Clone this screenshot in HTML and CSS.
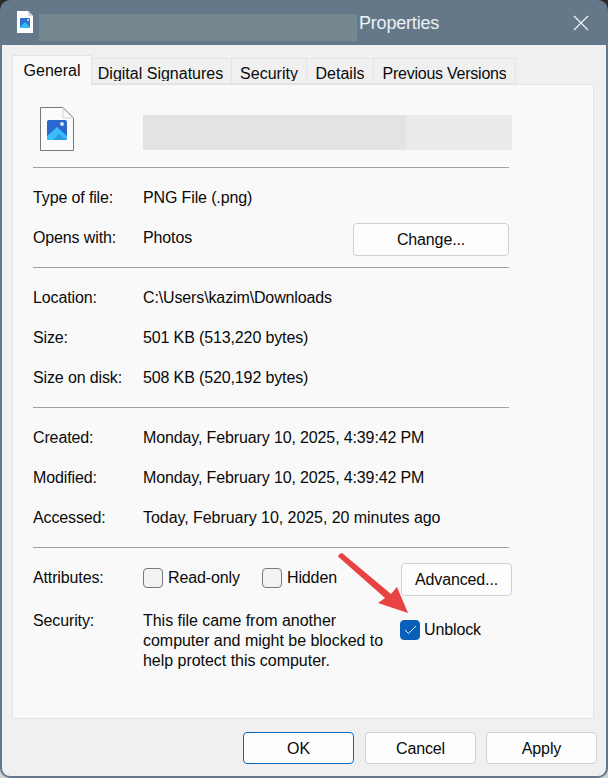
FILE: index.html
```html
<!DOCTYPE html>
<html lang="en">
<head>
<meta charset="utf-8">
<title>Properties</title>
<link rel="stylesheet" href="styles.css">
</head>
<body>
<div class="window">
  <header class="titlebar">
    <svg class="title-icon" width="16" height="22" viewBox="0 0 16 22">
      <path d="M0 0H11L16 5V22H0Z" fill="#fff"/>
      <path d="M11 0L16 5H11Z" fill="#d8d8d8"/>
      <rect x="3" y="7" width="10" height="10" rx="1" fill="#2f6fd0"/>
      <path d="M3 16L8 11L13 16V17H3Z" fill="#35b9f5"/>
      <circle cx="11" cy="9" r="1" fill="#dfe8f5"/>
    </svg>
    <div class="title-redact"></div>
    <span class="title-text">Properties</span>
    <svg class="close" width="16" height="16" viewBox="0 0 16 16"><path d="M1 1L15 15M15 1L1 15" stroke="#f2f4f5" stroke-width="1.2" fill="none"/></svg>
  </header>
  <main class="client">
    <nav class="tabs">
      <div class="tab active"><span>General</span></div>
      <div class="tab w-sig"><span>Digital Signatures</span></div>
      <div class="tab w-sec"><span>Security</span></div>
      <div class="tab w-det"><span>Details</span></div>
      <div class="tab w-prev"><span>Previous Versions</span></div>
    </nav>
    <section class="panel">
      <div class="file-head">
        <svg class="file-icon" width="34" height="44" viewBox="0 0 34 44">
          <path d="M.5.5H23L33.500 11V43.500H.5Z" fill="#fbfbfb" stroke="#7d7774"/>
          <path d="M23 .5V11H33.500" fill="none" stroke="#d5d2d0"/>
          <rect x="7" y="13" width="20" height="20" rx="2" fill="#2c68cc"/>
          <path d="M7 29L17 20L27 29V31A2 2 0 0 1 25 33H9A2 2 0 0 1 7 31Z" fill="#38bdf8"/>
          <path d="M13 33L19 27L27 33Z" fill="#2b9ae6"/>
          <circle cx="22" cy="17" r="2" fill="#d9e4f6"/>
        </svg>
        <div class="name-redact"><div class="name-a"></div><div class="name-b"></div></div>
      </div>
      <hr class="sep">
      <div class="group first">
        <div class="row"><span class="label">Type of file:</span><span>PNG File (.png)</span></div>
        <div class="row"><span class="label">Opens with:</span><span>Photos</span><button class="btn change">Change...</button></div>
      </div>
      <hr class="sep">
      <div class="group">
        <div class="row"><span class="label">Location:</span><span>C:\Users\kazim\Downloads</span></div>
        <div class="row"><span class="label">Size:</span><span>501 KB (513,220 bytes)</span></div>
        <div class="row"><span class="label">Size on disk:</span><span>508 KB (520,192 bytes)</span></div>
      </div>
      <hr class="sep">
      <div class="group">
        <div class="row"><span class="label">Created:</span><span>Monday, February 10, 2025, 4:39:42 PM</span></div>
        <div class="row"><span class="label">Modified:</span><span>Monday, February 10, 2025, 4:39:42 PM</span></div>
        <div class="row"><span class="label">Accessed:</span><span class="loose">Today, February 10, 2025, 20 minutes ago</span></div>
      </div>
      <hr class="sep">
      <div class="attrs">
        <span class="label attr-label">Attributes:</span>
        <label class="check ro"><i class="box"></i>Read-only</label>
        <label class="check"><i class="box"></i>Hidden</label>
        <button class="btn advanced">Advanced...</button>
      </div>
      <div class="security">
        <span class="label">Security:</span>
        <p class="sec-text">This file came from another computer and might be blocked to help protect this computer.</p>
        <label class="check unblock"><i class="box on"><svg width="13" height="10" viewBox="0 0 13 10"><path d="M1 5L4.500 8.500L12 1" fill="none" stroke="#fff" stroke-width="0.900"/></svg></i>Unblock</label>
      </div>
      <svg class="arrow" width="80" height="70" viewBox="0 0 80 70">
        <path d="M1.500 1L4 0L53 41L59 34L70 60L40 50L47 45L0 3.500Z" fill="#e84242"/>
      </svg>
    </section>
    <footer class="actions">
      <button class="btn act default">OK</button>
      <button class="btn act">Cancel</button>
      <button class="btn act apply">Apply</button>
    </footer>
  </main>
</div>
</body>
</html>
```

FILE: styles.css
```css
* { box-sizing: border-box; }
html, body { margin: 0; height: 100%; }
body {
  width: 608px;
  height: 778px;
  overflow: hidden;
  background: linear-gradient(#2a2a2a 0 50%, #d0d0d0 50%);
  font-family: "Liberation Sans", Arial, sans-serif;
  font-size: 16px;
  letter-spacing: -0.13px;
  color: #0a0a0a;
}
.window {
  width: 608px;
  height: 778px;
  display: flex;
  flex-direction: column;
  background: #64788a;
  border-radius: 10px;
  padding: 0 2px 2px;
  overflow: hidden;
}
.titlebar {
  height: 45px;
  flex: none;
  display: flex;
  align-items: flex-start;
  padding-left: 15px;
}
.title-icon { margin-top: 11px; flex: none; }
.title-redact {
  width: 318px;
  height: 27px;
  margin: 14px 0 0 6px;
  background: #75878f;
}
.title-text {
  width: 80px;
  margin: 11px 0 0 2px;
  font-size: 18px;
  letter-spacing: -0.2px;
  line-height: 24px;
  white-space: nowrap;
  color: #eef2f4;
}
.close { margin: 15px 0 0 134px; flex: none; }
.client {
  flex: 1;
  display: flex;
  flex-direction: column;
  background: #f0f0f0;
  padding: 10px 12px 0 10px;
  border-radius: 0 0 8px 8px;
}
.tabs {
  display: flex;
  height: 29px;
  flex: none;
  align-items: flex-end;
  position: relative;
  z-index: 1;
}
.tab {
  height: 26px;
  flex: none;
  border: 1px solid #e4e4e4;
  border-left: 0;
  display: flex;
  justify-content: center;
  padding-top: 5px;
  background: #f0f0f0;
  letter-spacing: 0;
}
.tab span { display: block; height: 17px; line-height: 19px; overflow: hidden; white-space: nowrap; }
.tab.active {
  width: 80px;
  height: 30px;
  margin-bottom: -1px;
  border: 1px solid #e4e4e4;
  border-bottom: 0;
  background: #f9f9f9;
  padding-top: 5px;
}
.tab.active span { height: 20px; }
.w-sig { width: 140px; padding-right: 2px; }
.w-sec { width: 75px; }
.w-det { width: 67px; }
.w-prev { width: 142px; letter-spacing: -0.24px; }
.panel {
  width: 582px;
  height: 635px;
  flex: none;
  background: #f9f9f9;
  border: 1px solid #e4e4e4;
  padding: 22px 0 0 20px;
  position: relative;
}
.file-head { display: flex; align-items: flex-start; height: 60px; }
.file-icon { margin-left: 7px; flex: none; }
.name-redact { display: flex; width: 369px; height: 35px; margin: 8px 0 0 69px; }
.name-a { width: 263px; background: #e3e3e3; }
.name-b { flex: 1; background: #ebe9e9; }
.sep {
  width: 476px;
  height: 1px;
  margin: 0;
  border: 0;
  background: #a0a0a0;
}
.group { padding: 10px 0 9px; }
.row { display: flex; align-items: center; height: 40px; width: 476px; }
.loose { letter-spacing: -0.05px; }
.label { width: 110px; flex: none; }
.btn {
  font: inherit;
  letter-spacing: inherit;
  color: inherit;
  background: #fdfdfd;
  border: 1px solid #d0d0d0;
  border-radius: 4px;
  padding: 0;
}
.change { width: 156px; height: 33px; margin: 3px 0 0 auto; }
.attrs { display: flex; align-items: center; height: 33px; margin-top: 15px; }
.attr-label { margin-top: -4px; }
.check { display: flex; align-items: center; white-space: nowrap; margin-top: -3px; }
.box {
  width: 20px;
  height: 20px;
  flex: none;
  margin-right: 5px;
  background: #f2f2f2;
  border: 1px solid #7a7a7a;
  border-radius: 4px;
  display: flex;
  align-items: center;
  justify-content: center;
}
.box.on { background: #0a60b8; border-color: #0a60b8; margin-right: 4px; }
.check.ro { width: 119px; }
.advanced { width: 111px; height: 33px; margin-left: auto; margin-right: 81px; }
.security { display: flex; align-items: flex-start; margin-top: 15px; line-height: 20px; }
.sec-text { width: 257px; margin: 0; flex: none; letter-spacing: -0.03px; }
.unblock { margin-top: 9px; }
.arrow { position: absolute; left: 325px; top: 468px; }
.actions {
  display: flex;
  gap: 11px;
  margin-top: 13px;
  margin-left: 231px;
}
.act { width: 111px; height: 32px; flex: none; padding-top: 1px; }
.act.apply { margin-left: -1px; }
.act.default { border-color: #0a67c0; }
```
